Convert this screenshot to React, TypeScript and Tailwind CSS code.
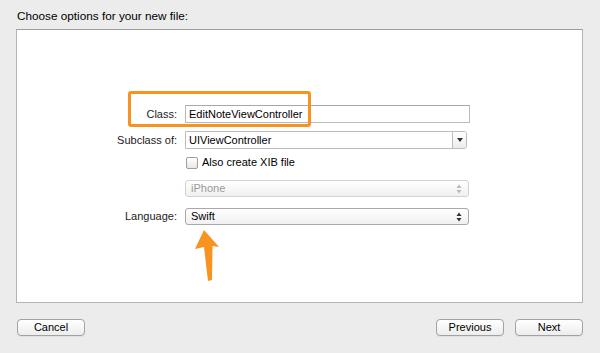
import React from "react";

function Popup({ text, disabled }: { text: string; disabled?: boolean }) {
  return (
    <div
      className={`flex h-[17px] w-[284px] items-center justify-between rounded-[3px] border bg-gradient-to-b from-white to-[#f0f0f0] pl-[5px] pr-[6px] text-[11px] ${
        disabled ? "border-[#d2d2d2] text-[#9a9a9a]" : "border-[#a9a9a9] text-black"
      }`}
    >
      <span>{text}</span>
      <svg width="6" height="10" viewBox="0 0 6 10">
        <path d="M3 0.5 L5.5 4 L0.5 4 Z" fill={disabled ? "#b8b8b8" : "#333"} />
        <path d="M3 9.5 L5.5 6 L0.5 6 Z" fill={disabled ? "#b8b8b8" : "#333"} />
      </svg>
    </div>
  );
}

function Button({ label }: { label: string }) {
  return (
    <button className="flex h-[17px] w-[68px] items-center justify-center rounded-[4px] border border-[#a2a2a2] bg-gradient-to-b from-white to-[#ededed] text-[11px] text-black shadow-[0_1px_0_rgba(0,0,0,0.05)]">
      {label}
    </button>
  );
}

export default function App() {
  return (
    <div className="relative h-[353px] w-[600px] overflow-hidden bg-[#ececec] font-['Liberation_Sans',Arial,sans-serif] text-black">
      {/* Title */}
      <div className="h-[29px] pl-[17px] pt-[9px] text-[11.75px] leading-[13px]">
        Choose options for your new file:
      </div>

      {/* Panel */}
      <div className="ml-[16px] h-[274px] w-[567px] border border-[#b4b4b4] border-t-[#9d9d9d] bg-white pt-[75px] leading-[13px]">
        <div className="flex items-center">
          <div className="w-[161px] pr-[1px] text-right text-[11px] text-[#222]">Class:</div>
          <div className="ml-[7px] flex h-[18px] w-[285px] items-center border border-[#bcbcbc] border-t-[#a8a8a8] bg-white pl-[3px] text-[11px]">
            EditNoteViewController
          </div>
        </div>

        <div className="mt-[8px] flex items-center">
          <div className="w-[161px] pr-[1px] text-right text-[11px] text-[#222]">Subclass of:</div>
          <div className="ml-[7px] flex h-[18px] w-[282px] items-center overflow-hidden rounded-r-[3px] border border-[#bcbcbc] bg-white text-[11px]">
            <span className="flex-1 pl-[3px]">UIViewController</span>
            <div className="flex h-full w-[14px] items-center justify-center border-l border-[#bcbcbc] bg-gradient-to-b from-white to-[#ececec]">
              <svg width="6" height="4" viewBox="0 0 6 4">
                <path d="M0 0 L6 0 L3 4 Z" fill="#333" />
              </svg>
            </div>
          </div>
        </div>

        <div className="mt-[7px] flex h-[13px] items-center">
          <div className="ml-[169px] h-[12px] w-[12px] rounded-[2px] border border-[#9f9f9f] bg-gradient-to-b from-white to-[#e8e8e8]" />
          <span className="ml-[4px] text-[11px]">Also create XIB file</span>
        </div>

        <div className="mt-[11px] flex items-center">
          <div className="ml-[168px]">
            <Popup text="iPhone" disabled />
          </div>
        </div>

        <div className="mt-[11px] flex items-center">
          <div className="w-[161px] pr-[1px] text-right text-[11px] text-[#222]">Language:</div>
          <div className="ml-[7px]">
            <Popup text="Swift" />
          </div>
        </div>
      </div>

      {/* Buttons */}
      <div className="mt-[16px] flex w-[600px] items-center px-[17px]">
        <Button label="Cancel" />
        <div className="flex-1" />
        <Button label="Previous" />
        <div className="ml-[11px]">
          <Button label="Next" />
        </div>
      </div>

      {/* Highlight box */}
      <div className="absolute left-[128px] top-[91px] h-[36px] w-[183px] rounded-[3px] border-[3px] border-[#f7931e]" />

      {/* Arrow */}
      <svg className="absolute left-[190px] top-[226px]" width="34" height="60" viewBox="0 0 34 60">
        <path d="M14 4 L29 21 L22.5 20 L22 54 L18 55 L14 21 L5 23 Z" fill="#f7931e" />
      </svg>
    </div>
  );
}
